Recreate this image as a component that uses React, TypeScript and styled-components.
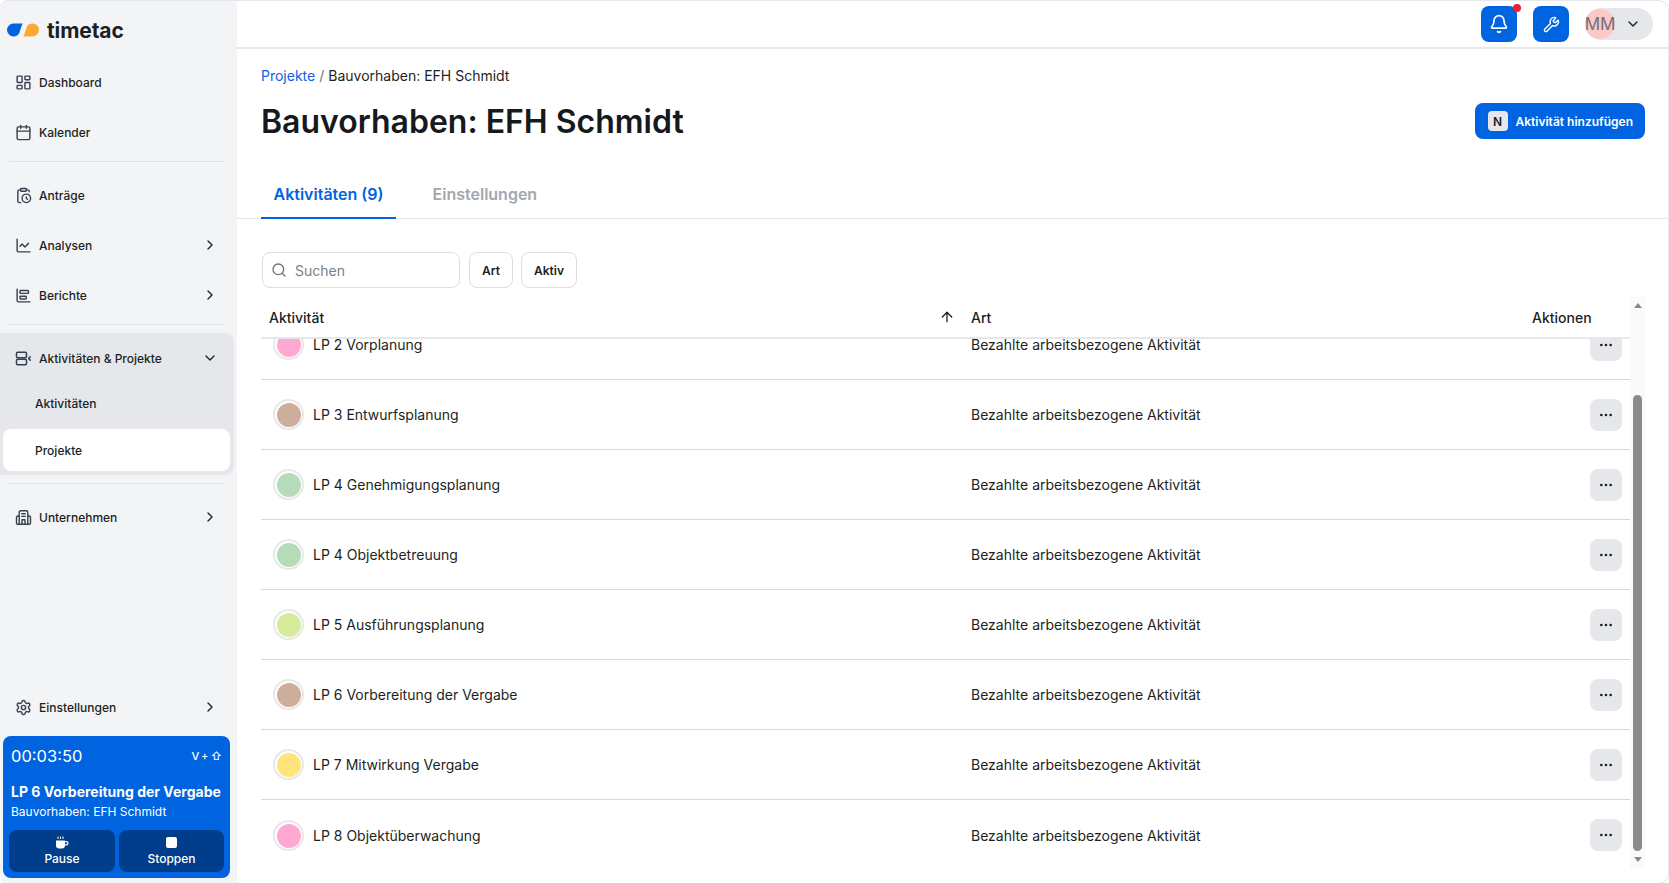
import React from 'react';
import styled, { createGlobalStyle } from 'styled-components';
import {
  ArrowUp,
  Bell,
  Calendar,
  ChartBarBig,
  ChartLine,
  ChevronDown,
  ChevronRight,
  ClipboardClock,
  Ellipsis,
  LayoutDashboard,
  Search,
  Settings,
  Wrench,
} from 'lucide-react';

const BLUE = '#0063e0';

const ACTIVITIES = [
  { name: 'LP 2 Vorplanung', color: '#ffa8d2' },
  { name: 'LP 3 Entwurfsplanung', color: '#cdae9c' },
  { name: 'LP 4 Genehmigungsplanung', color: '#b5dcb9' },
  { name: 'LP 4 Objektbetreuung', color: '#b5dcb9' },
  { name: 'LP 5 Ausführungsplanung', color: '#d6ec9c' },
  { name: 'LP 6 Vorbereitung der Vergabe', color: '#cdae9c' },
  { name: 'LP 7 Mitwirkung Vergabe', color: '#ffe47c' },
  { name: 'LP 8 Objektüberwachung', color: '#ffa8d2' },
];

const ProjectsIcon = () => (
  <svg width="17" height="17" viewBox="0 0 17 17" fill="none" stroke="currentColor" strokeWidth="1.5" strokeLinejoin="round" strokeLinecap="round">
    <rect x="1.500" y="2.200" width="10" height="5.600" rx="1.200" />
    <rect x="1.500" y="9.200" width="10" height="5.600" rx="1.200" />
    <path d="M15.200 6.900 13.600 8.500l1.600 1.600" />
  </svg>
);

const BuildingIcon = () => (
  <svg width="17" height="17" viewBox="0 0 17 17" fill="none" stroke="currentColor" strokeWidth="1.4" strokeLinejoin="round" strokeLinecap="round">
    <path d="M4.200 15.200V3.200c0-.8.600-1.400 1.400-1.400h5.800c.8 0 1.400.6 1.400 1.400v12" />
    <path d="M4.200 7H2.800c-.8 0-1.300.6-1.300 1.300v5.600c0 .8.500 1.300 1.300 1.300h11.400c.8 0 1.300-.5 1.300-1.300V8.300c0-.7-.5-1.300-1.300-1.300h-1.400" />
    <path d="M6.800 4.800h3.400M6.800 7.400h3.400M7 15.200v-4.400h3v4.400" />
  </svg>
);

const CoffeeIcon = () => (
  <svg width="14" height="13" viewBox="0 0 14 13" fill="#fff">
    <path d="M1 4.500h9v5c0 1.700-1.300 3-3 3H4c-1.700 0-3-1.300-3-3v-5Z" />
    <path d="M10 5h1.300a2.200 2.200 0 0 1 0 4.600H10V8.300h1.300a.9.9 0 0 0 0-2H10V5Z" />
    <path d="M2.500.5h1V3h-1zM5 .5h1V3H5zM7.500.5h1V3h-1z" />
  </svg>
);

const Logo = () => (
  <svg width="32" height="14" viewBox="0 0 32 14">
    <path d="M6.500.5H15.600C14 4 13.500 6.500 12.500 9.500A6.500 6.500 0 0 1 6.500 13.500 6.500 6.500 0 0 1 6.500.5Z" fill="#0063e0" />
    <path d="M6.500.5H15.600C14 4 13.500 6.500 12.500 9.500A6.500 6.500 0 0 1 6.500 13.500 6.500 6.500 0 0 1 6.500.5Z" fill="#ffa733" transform="rotate(180 16 7)" />
  </svg>
);

export default function App() {
  return (
    <Page>
      <GlobalStyle />
      <Sidebar>
        <Brand>
          <Logo />
          <BrandName>timetac</BrandName>
        </Brand>

        <NavItem><LayoutDashboard size={17} />Dashboard</NavItem>
        <NavItem><Calendar size={17} />Kalender</NavItem>
        <NavDivider />
        <NavItem><ClipboardClock size={17} />Anträge</NavItem>
        <NavItem><ChartLine size={17} />Analysen<NavChevron><ChevronRight size={16} /></NavChevron></NavItem>
        <NavItem><ChartBarBig size={17} />Berichte<NavChevron><ChevronRight size={16} /></NavChevron></NavItem>
        <NavDivider />

        <NavGroup>
          <NavItem><ProjectsIcon />Aktivitäten &amp; Projekte<NavChevron><ChevronDown size={16} /></NavChevron></NavItem>
          <SubItem>Aktivitäten</SubItem>
          <SubItem $active>Projekte</SubItem>
        </NavGroup>
        <NavDivider />
        <NavItem><BuildingIcon />Unternehmen<NavChevron><ChevronRight size={16} /></NavChevron></NavItem>

        <BottomNav>
          <NavItem><Settings size={17} />Einstellungen<NavChevron><ChevronRight size={16} /></NavChevron></NavItem>
          <TimerCard>
            <TimerTop>
              <TimerClock>00:03:50</TimerClock>
              <TimerKeys>V + ⇧</TimerKeys>
            </TimerTop>
            <TimerTitle>LP 6 Vorbereitung der Vergabe</TimerTitle>
            <TimerProject>Bauvorhaben: EFH Schmidt</TimerProject>
            <TimerActions>
              <TimerButton><CoffeeIcon />Pause</TimerButton>
              <TimerButton><StopSquare />Stoppen</TimerButton>
            </TimerActions>
          </TimerCard>
        </BottomNav>
      </Sidebar>

      <Main>
        <TopBar>
          <SquareButton $badge><Bell size={20} /></SquareButton>
          <SquareButton><Wrench size={17} /></SquareButton>
          <UserPill>
            <Avatar>MM</Avatar>
            <ChevronDown size={16} />
          </UserPill>
        </TopBar>

        <Heading>
          <Breadcrumb><BreadcrumbLink>Projekte</BreadcrumbLink><BreadcrumbSep>/</BreadcrumbSep>Bauvorhaben: EFH Schmidt</Breadcrumb>
          <TitleRow>
            <Title>Bauvorhaben: EFH Schmidt</Title>
            <AddButton><KeyHint>N</KeyHint>Aktivität hinzufügen</AddButton>
          </TitleRow>
        </Heading>

        <Tabs>
          <Tab $active>Aktivitäten (9)</Tab>
          <Tab>Einstellungen</Tab>
        </Tabs>

        <Filters>
          <SearchBox>
            <Search size={16} />
            <SearchPlaceholder>Suchen</SearchPlaceholder>
          </SearchBox>
          <FilterButton>Art</FilterButton>
          <FilterButton>Aktiv</FilterButton>
        </Filters>

        <TableArea>
          <Table>
            <HeaderRow>
              <NameHeader>Aktivität<ArrowUp size={16} /></NameHeader>
              <span>Art</span>
              <span>Aktionen</span>
            </HeaderRow>
            <RowsViewport>
              {ACTIVITIES.map((activity) => (
                <Row key={activity.name}>
                  <NameCell>
                    <Swatch $color={activity.color} />
                    {activity.name}
                  </NameCell>
                  <span>Bezahlte arbeitsbezogene Aktivität</span>
                  <MoreButton><Ellipsis size={16} /></MoreButton>
                </Row>
              ))}
            </RowsViewport>
          </Table>
          <ScrollRail>
            <ArrowUpMark />
            <ScrollThumb />
            <ArrowDownMark />
          </ScrollRail>
        </TableArea>
      </Main>
    </Page>
  );
}

const GlobalStyle = createGlobalStyle`
  html, body {
    margin: 0;
    height: 100%;
    background: #fff;
    overflow: hidden;
  }

  body {
    font-family: Inter, "Liberation Sans", sans-serif;
    color: #1c1f24;
  }

  * {
    box-sizing: border-box;
  }
`;

const Page = styled.div`
  display: grid;
  grid-template-columns: 237px 1fr;
  height: 100vh;
  overflow: hidden;
`;

const Sidebar = styled.aside`
  display: flex;
  flex-direction: column;
  background: #f3f4f6;
  border-top: 1px solid #e5e7eb;
  border-radius: 8px 0 0 8px;
  padding-bottom: 6px;
`;

const Brand = styled.div`
  display: flex;
  align-items: center;
  gap: 8px;
  height: 56px;
  padding: 2px 0 0 7px;
  flex-shrink: 0;
`;

const BrandName = styled.span`
  font-size: 21px;
  font-weight: 700;
  letter-spacing: -0.1px;
  color: #1c1f24;
`;

const NavItem = styled.div`
  display: flex;
  align-items: center;
  gap: 7px;
  height: 50px;
  padding-left: 15px;
  padding-right: 19px;
  font-size: 12px;
  font-weight: 500;
  color: #1c1f24;
  flex-shrink: 0;

  svg {
    flex-shrink: 0;
    color: #374151;
  }
`;

const NavChevron = styled.span`
  display: flex;
  margin-left: auto;

  svg {
    color: #1c1f24;
  }
`;

const NavDivider = styled.div`
  height: 1px;
  margin: 4px 12px 8px 9px;
  background: #dfe1e5;
  flex-shrink: 0;
`;

const NavGroup = styled.div`
  display: flex;
  flex-direction: column;
  gap: 5px;
  margin: 0 3px 4px 0;
  padding-bottom: 4px;
  background: #e5e7eb;
  border-radius: 0 8px 8px 0;

  ${NavItem} {
    margin-bottom: -6px;
    padding-right: 16px;
  }
`;

const SubItem = styled.div<{ $active?: boolean }>`
  display: flex;
  align-items: center;
  height: 42px;
  margin: 0 4px 0 3px;
  padding-left: 32px;
  border-radius: 8px;
  font-size: 12px;
  font-weight: 500;
  background: ${(p) => (p.$active ? '#fff' : 'transparent')};
`;

const BottomNav = styled.div`
  display: flex;
  flex-direction: column;
  margin-top: auto;
`;

const TimerCard = styled.div`
  display: flex;
  flex-direction: column;
  height: 142px;
  margin: 4px 7px 0 3px;
  padding: 6px 6px 6px;
  background: ${BLUE};
  border-radius: 8px;
  color: #fff;
`;

const TimerTop = styled.div`
  display: flex;
  align-items: center;
  justify-content: space-between;
  height: 28px;
  padding: 0 2px 0 2px;
`;

const TimerClock = styled.span`
  font-size: 16.5px;
`;

const TimerKeys = styled.span`
  font-size: 11px;
  font-weight: 500;
  word-spacing: -1px;
`;

const TimerTitle = styled.div`
  margin-top: 13px;
  padding-left: 2px;
  font-size: 14px;
  font-weight: 700;
  white-space: nowrap;
`;

const TimerProject = styled.div`
  margin-top: 4px;
  padding-left: 2px;
  font-size: 12px;
  font-weight: 400;
`;

const TimerActions = styled.div`
  display: grid;
  grid-template-columns: 106px 105px;
  gap: 4px;
  margin-top: auto;
`;

const TimerButton = styled.div`
  display: flex;
  flex-direction: column;
  align-items: center;
  justify-content: flex-end;
  gap: 2px;
  height: 42px;
  padding-bottom: 6px;
  background: #003d8a;
  border-radius: 8px;
  font-size: 12px;
  font-weight: 500;
`;

const StopSquare = styled.span`
  display: block;
  width: 11px;
  height: 11px;
  margin-bottom: 1px;
  border-radius: 2px;
  background: #fff;
`;

const Main = styled.main`
  display: flex;
  flex-direction: column;
  min-width: 0;
  height: calc(100vh + 1px);
  border: 1px solid #e5e7eb;
  border-left: none;
  border-radius: 0 10px 10px 0;
`;

const TopBar = styled.header`
  display: flex;
  align-items: center;
  justify-content: flex-end;
  gap: 16px;
  flex-shrink: 0;
  height: 48px;
  padding-right: 15px;
  border-bottom: 2px solid #e5e7eb;
`;

const SquareButton = styled.div<{ $badge?: boolean }>`
  position: relative;
  display: flex;
  align-items: center;
  justify-content: center;
  width: 36px;
  height: 36px;
  background: ${BLUE};
  border-radius: 8px;
  color: #fff;

  ${(p) =>
    p.$badge &&
    `&::after {
      content: '';
      position: absolute;
      top: -2px;
      right: -4px;
      width: 8px;
      height: 8px;
      border-radius: 50%;
      background: #ef1d36;
    }`}
`;

const UserPill = styled.div`
  display: flex;
  align-items: center;
  gap: 10px;
  width: 68px;
  height: 32px;
  background: #e5e7eb;
  border-radius: 16px;
  color: #1c1f24;
`;

const Avatar = styled.span`
  display: flex;
  align-items: center;
  justify-content: center;
  width: 30px;
  height: 30px;
  border-radius: 50%;
  background: #fdc9c4;
  color: #6b7280;
  font-size: 17px;
  flex-shrink: 0;
`;

const Heading = styled.div`
  flex-shrink: 0;
  padding: 18px 23px 0 24px;
`;

const Breadcrumb = styled.div`
  display: flex;
  align-items: center;
  height: 17px;
  font-size: 14px;
`;

const BreadcrumbLink = styled.span`
  color: #0f62e6;
`;

const BreadcrumbSep = styled.span`
  margin: 0 4px;
  color: #6b7280;
`;

const TitleRow = styled.div`
  display: flex;
  align-items: center;
  justify-content: space-between;
  height: 40px;
  margin-top: 17px;
`;

const Title = styled.h1`
  margin: 0;
  font-size: 32px;
  font-weight: 600;
  color: #16191d;
`;

const AddButton = styled.div`
  display: flex;
  align-items: center;
  gap: 8px;
  height: 36px;
  padding: 0 12px 0 13px;
  background: ${BLUE};
  border-radius: 8px;
  color: #fff;
  font-size: 12px;
  font-weight: 600;
`;

const KeyHint = styled.span`
  display: flex;
  align-items: center;
  justify-content: center;
  width: 20px;
  height: 20px;
  background: #e5e7eb;
  border-radius: 4px;
  color: #1c1f24;
  font-size: 12px;
  font-weight: 600;
`;

const Tabs = styled.div`
  display: flex;
  gap: 24px;
  flex-shrink: 0;
  height: 60px;
  margin-top: 18px;
  padding-left: 24px;
  border-bottom: 1px solid #e5e7eb;
`;

const Tab = styled.div<{ $active?: boolean }>`
  display: flex;
  align-items: center;
  height: 60px;
  padding: 12px 12.500px 0;
  border-bottom: 2px solid ${(p) => (p.$active ? BLUE : 'transparent')};
  color: ${(p) => (p.$active ? BLUE : '#a3a6ab')};
  font-size: 16px;
  font-weight: 600;
`;

const Filters = styled.div`
  display: flex;
  gap: 8px;
  flex-shrink: 0;
  margin-top: 33px;
  padding-left: 25px;
`;

const SearchBox = styled.div`
  display: flex;
  align-items: center;
  gap: 8px;
  width: 198px;
  height: 36px;
  margin-right: 1px;
  padding-left: 8px;
  border: 1px solid #dcdee2;
  border-radius: 8px;
  color: #6b7280;
`;

const SearchPlaceholder = styled.span`
  font-size: 14px;
  color: #7b8088;
`;

const FilterButton = styled.div`
  display: flex;
  align-items: center;
  justify-content: center;
  height: 36px;
  padding: 0 12px;
  border: 1px solid #dcdee2;
  border-radius: 8px;
  font-size: 12px;
  font-weight: 600;
`;

const TableArea = styled.div`
  display: flex;
  flex: 1;
  min-height: 0;
  margin: 9px 23px 15px 24px;
`;

const Table = styled.div`
  display: flex;
  flex-direction: column;
  flex: 1;
  min-width: 0;
`;

const ScrollRail = styled.div`
  display: flex;
  flex-direction: column;
  align-items: center;
  flex-shrink: 0;
  width: 15px;
  padding-top: 6px;
  background: #fafafa;
`;

const ArrowUpMark = styled.span`
  width: 0;
  height: 0;
  border-left: 4px solid transparent;
  border-right: 4px solid transparent;
  border-bottom: 5px solid #8a8a8a;
`;

const ArrowDownMark = styled.span`
  width: 0;
  height: 0;
  margin-top: 6px;
  border-left: 4px solid transparent;
  border-right: 4px solid transparent;
  border-top: 5px solid #8a8a8a;
`;

const ScrollThumb = styled.span`
  width: 9px;
  height: 456px;
  margin-top: 87px;
  border-radius: 5px;
  background: #8a8a8a;
`;

const gridColumns = 'grid-template-columns: 710px 1fr 98px;';

const HeaderRow = styled.div`
  display: grid;
  ${gridColumns}
  align-items: center;
  flex-shrink: 0;
  height: 42px;
  border-bottom: 2px solid #e5e7eb;
  font-size: 14px;
  font-weight: 500;
`;

const NameHeader = styled.span`
  display: flex;
  align-items: center;
  justify-content: space-between;
  padding-left: 8px;
  padding-right: 16px;
`;

const RowsViewport = styled.div`
  flex: 1;
  min-height: 0;
  overflow: hidden;
`;

const Row = styled.div`
  display: grid;
  ${gridColumns}
  align-items: center;
  height: 70px;
  border-bottom: 1px solid #d9d9d9;
  font-size: 14px;

  /* the list is scrolled by a part of its first visible row */
  &:first-child {
    margin-top: -29px;
  }

  &:last-child {
    border-bottom: none;
  }
`;

const NameCell = styled.span`
  display: flex;
  align-items: center;
  gap: 9px;
  padding-left: 12px;
`;

const Swatch = styled.span<{ $color: string }>`
  width: 31px;
  height: 31px;
  border: 2px solid #e8e8e8;
  border-radius: 50%;
  background: ${(p) => p.$color};
  background-clip: content-box;
  padding: 1.500px;
`;

const MoreButton = styled.div`
  display: flex;
  align-items: center;
  justify-content: center;
  justify-self: end;
  width: 32px;
  height: 32px;
  margin-right: 8px;
  background: #e5e7eb;
  border-radius: 8px;
`;
